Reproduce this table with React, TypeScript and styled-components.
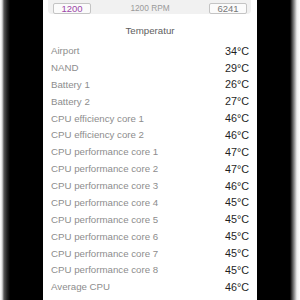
import React from "react";
import styled, { createGlobalStyle } from "styled-components";

const Global = createGlobalStyle`
  html, body { margin: 0; padding: 0; background: #ffffff; }
  body { font-family: "Liberation Sans", Arial, sans-serif; }
`;

const Stage = styled.div`
  width: 300px;
  height: 300px;
  overflow: hidden;
  display: flex;
  background: #000;
`;

const EdgeLeft = styled.div`
  width: 10px;
  flex: none;
  background: linear-gradient(to right, #fff 0px, #ddd 2px, #555 4px, #222 7px, #000 10px);
`;

const EdgeRight = styled.div`
  width: 10px;
  flex: none;
  background: linear-gradient(to left, #fff 0px, #f0f0f0 3px, #888 6px, #222 9px, #000 10px);
`;

const Shadow = styled.div`
  width: 33px;
  flex: none;
  background: #000;
`;

const Panel = styled.div`
  width: 214px;
  flex: none;
  background: #ffffff;
  display: flex;
  flex-direction: column;
`;

const FanBar = styled.div`
  margin: 0 6px 0 5px;
  height: 17px;
  box-sizing: border-box;
  padding: 3px 4px 0 5px;
  background: #f1f1f1;
  border-radius: 0 0 4px 4px;
  display: flex;
  justify-content: space-between;
  align-items: flex-start;
`;

const ValueBox = styled.div<{ $accent?: boolean }>`
  width: 38px;
  height: 11px;
  box-sizing: border-box;
  border: 1px solid #c4c4c4;
  border-radius: 2px;
  background: #fbfbfb;
  color: ${(p) => (p.$accent ? "#9b48a8" : "#777777")};
  font-size: 9.5px;
  line-height: 9px;
  text-align: center;
`;

const Rpm = styled.div`
  color: #9a9a9a;
  font-size: 8.3px;
  line-height: 11px;
`;

const Title = styled.div`
  height: 28.27px;
  box-sizing: border-box;
  padding-top: 5px;
  line-height: 24px;
  text-align: center;
  color: #5e5e5e;
  font-size: 9.7px;
`;

const List = styled.div`
  display: flex;
  flex-direction: column;
  padding: 0 8px 0 8px;
`;

const Row = styled.div`
  height: 16.86px;
  flex: none;
  display: flex;
  align-items: center;
  justify-content: space-between;
`;

const Label = styled.span`
  color: #8d8d8d;
  font-size: 9.7px;
`;

const Value = styled.span`
  color: #1f1f1f;
  font-size: 10.8px;
`;

const sensors: [string, string][] = [
  ["Airport", "34°C"],
  ["NAND", "29°C"],
  ["Battery 1", "26°C"],
  ["Battery 2", "27°C"],
  ["CPU efficiency core 1", "46°C"],
  ["CPU efficiency core 2", "46°C"],
  ["CPU performance core 1", "47°C"],
  ["CPU performance core 2", "47°C"],
  ["CPU performance core 3", "46°C"],
  ["CPU performance core 4", "45°C"],
  ["CPU performance core 5", "45°C"],
  ["CPU performance core 6", "45°C"],
  ["CPU performance core 7", "45°C"],
  ["CPU performance core 8", "45°C"],
  ["Average CPU", "46°C"],
  ["Hottest CPU", "47°C"],
];

export default function App() {
  return (
    <>
      <Global />
      <Stage>
        <EdgeLeft />
        <Shadow />
        <Panel>
          <FanBar>
            <ValueBox $accent>1200</ValueBox>
            <Rpm>1200 RPM</Rpm>
            <ValueBox>6241</ValueBox>
          </FanBar>
          <Title>Temperatur</Title>
          <List>
            {sensors.map(([name, value]) => (
              <Row key={name}>
                <Label>{name}</Label>
                <Value>{value}</Value>
              </Row>
            ))}
          </List>
        </Panel>
        <Shadow />
        <EdgeRight />
      </Stage>
    </>
  );
}
